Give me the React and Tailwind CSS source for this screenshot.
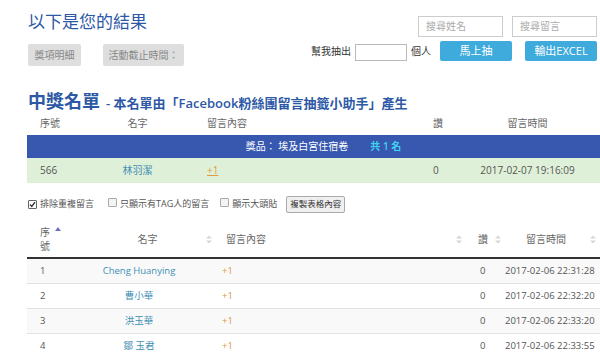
import React from 'react';

const FONT = { fontFamily: '"Open Sans", "Noto Sans CJK TC", sans-serif' };

const rows = [
  { id: 1, name: 'Cheng Huanying', time: '2017-02-06 22:31:28' },
  { id: 2, name: '曹小華', time: '2017-02-06 22:32:20' },
  { id: 3, name: '洪玉華', time: '2017-02-06 22:33:20' },
  { id: 4, name: '鄒 玉君', time: '2017-02-06 22:33:55' },
];

const SortIcon = ({ active }) => (
  <svg width="6" height="9" viewBox="0 0 6 9" className="shrink-0">
    {active ? (
      <path d="M0 4 L3 0 L6 4 Z" fill="#6a72c8" />
    ) : (
      <>
        <path d="M0 3.6 L3 0.4 L6 3.6 Z" fill="#d6d6d6" />
        <path d="M0 5.4 L3 8.6 L6 5.4 Z" fill="#d6d6d6" />
      </>
    )}
  </svg>
);

const Check = ({ checked }) => (
  <span
    className={`inline-flex items-center justify-center w-[9px] h-[9px] border rounded-[1px] ${
      checked ? 'border-[#666] bg-white' : 'border-[#aaa] bg-[#f4f4f4]'
    }`}
  >
    {checked && (
      <svg width="7" height="7" viewBox="0 0 7 7">
        <path d="M1 3.6 L2.8 5.4 L6 1.2" stroke="#333" strokeWidth="1.4" fill="none" />
      </svg>
    )}
  </span>
);

export default function App() {
  return (
    <div className="w-[600px] h-[355px] overflow-hidden bg-white text-[#555]" style={FONT}>
      {/* Top area */}
      <div className="flex pl-[28px] pt-[10px] h-[66px]">
        <div className="flex flex-col">
          <h1 className="text-[17px] leading-[24px] text-[#2d58a6]">以下是您的結果</h1>
          <div className="flex gap-[22px] mt-[10px]">
            <div className="w-[53px] h-[22px] rounded-[2px] bg-[#dedede] text-[10px] text-[#888] flex items-center justify-center">
              獎項明細
            </div>
            <div className="w-[81px] h-[22px] rounded-[2px] bg-[#dedede] text-[10px] text-[#888] flex items-center justify-center">
              活動截止時間：
            </div>
          </div>
        </div>
        <div className="ml-auto flex flex-col items-end pr-[3px] pt-[6px]">
          <div className="flex gap-[9px]">
            <div className="w-[85px] h-[21px] border border-[#ccc] text-[10px] text-[#aaa] pl-[7px] flex items-center">
              搜尋姓名
            </div>
            <div className="w-[85px] h-[21px] border border-[#ccc] text-[10px] text-[#aaa] pl-[7px] flex items-center">
              搜尋留言
            </div>
          </div>
          <div className="flex items-center mt-[4px]">
            <span className="text-[10px] text-[#333] mr-[4px]">幫我抽出</span>
            <div className="w-[52px] h-[17px] border border-[#bbb] mt-[3px]" />
            <span className="text-[10px] text-[#333] ml-[4px]">個人</span>
            <div className="ml-[9px] w-[72px] h-[20px] rounded-[2px] bg-[#3fabdd] text-white text-[11px] flex items-center justify-center">
              馬上抽
            </div>
            <div className="ml-[13px] w-[72px] h-[20px] rounded-[2px] bg-[#3fabdd] text-white text-[11px] flex items-center justify-center">
              輸出EXCEL
            </div>
          </div>
        </div>
      </div>

      {/* Winners */}
      <div className="pl-[27px] mt-[25px]">
        <div className="flex items-end h-[21px] text-[#2d58a6] pl-[1px]">
          <span className="text-[18px] leading-[21px] font-semibold">中獎名單</span>
          <span className="text-[13px] leading-[18px] font-semibold ml-[6px]">- 本名單由「Facebook粉絲團留言抽籤小助手」產生</span>
        </div>
        <div className="grid grid-cols-[63px_95px_235px_35px_1fr] text-[10px] text-[#666] h-[23px] items-center">
          <span className="pl-[13px]">序號</span>
          <span className="text-center">名字</span>
          <span className="pl-[22px]">留言內容</span>
          <span className="pl-[13px]">讚</span>
          <span className="text-center">留言時間</span>
        </div>
        <div className="h-[23px] bg-[#3758ae] flex items-center justify-center text-[10px] text-white pl-[20px]">
          <span>獎品： 埃及白宮住宿卷</span>
          <span className="ml-[22px] text-[#3fd2f2] font-semibold">共 1 名</span>
        </div>
        <div className="grid grid-cols-[63px_95px_235px_35px_1fr] h-[25px] items-center bg-[#dff0d8] text-[10px] text-[#555]">
          <span className="pl-[13px]">566</span>
          <span className="text-center text-[#3f8fb5]">林羽潔</span>
          <span className="pl-[22px] text-[#e09a3c] underline">+1</span>
          <span className="pl-[13px]">0</span>
          <span className="text-center">2017-02-07 19:16:09</span>
        </div>
      </div>

      {/* Options */}
      <div className="flex items-center pl-[28px] mt-[12px] text-[9px] text-[#555] h-[18px]">
        <Check checked />
        <span className="ml-[3px]">排除重複留言</span>
        <span className="ml-[14px]"><Check /></span>
        <span className="ml-[3px]">只顯示有TAG人的留言</span>
        <span className="ml-[11px]"><Check /></span>
        <span className="ml-[3px]">顯示大頭貼</span>
        <div className="ml-[9px] h-[17px] w-[59px] border border-[#aaa] rounded-[2px] bg-[#f0f0f0] text-[8.5px] text-[#333] flex items-center justify-center">
          複製表格內容
        </div>
      </div>

      {/* Table */}
      <div className="pl-[27px] mt-[8px] text-[9.5px] text-[#555]">
        <div className="grid grid-cols-[58px_133px_250px_32px_1fr] h-[38px] items-center border-b-2 border-[#333]">
          <div className="pl-[13px] flex items-start gap-[5px]">
            <span className="leading-[14px] text-[#666] text-[10px]">序<br />號</span>
            <span className="mt-[2px]"><SortIcon active /></span>
          </div>
          <div className="flex items-center pr-[6px]">
            <span className="flex-1 text-center text-[#666] text-[10px] pl-[4px]">名字</span>
            <SortIcon />
          </div>
          <div className="flex items-center pl-[8px] pr-[6px]">
            <span className="flex-1 text-[#666] text-[10px]">留言內容</span>
            <SortIcon />
          </div>
          <div className="flex items-center pl-[10px] gap-[7px]">
            <span className="text-[#666] text-[10px]">讚</span>
            <SortIcon />
          </div>
          <div className="flex items-center pr-[4px]">
            <span className="flex-1 text-center text-[#666] text-[10px] pl-[2px]">留言時間</span>
            <SortIcon />
          </div>
        </div>
        {rows.map((r, i) => (
          <div
            key={r.id}
            className={`grid grid-cols-[58px_133px_250px_32px_1fr] h-[25px] items-center border-b border-[#e2e2e2] ${
              i % 2 === 0 ? 'bg-[#f9f9f9]' : 'bg-white'
            }`}
          >
            <span className="pl-[13px]">{r.id}</span>
            <span className="text-center text-[#3f8fb5] pr-[25px]">{r.name}</span>
            <span className="pl-[4px] text-[#e09a3c]">+1</span>
            <span className="pl-[12px]">0</span>
            <span className="pl-[5px]">{r.time}</span>
          </div>
        ))}
      </div>
    </div>
  );
}
